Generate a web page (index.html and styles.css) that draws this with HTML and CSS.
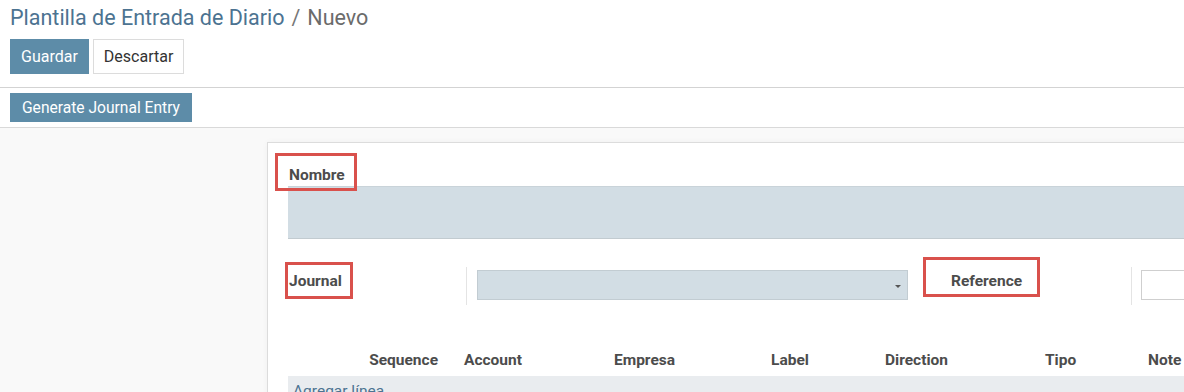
FILE: index.html
```html
<!DOCTYPE html>
<html lang="es">
<head>
<meta charset="utf-8">
<title>Plantilla de Entrada de Diario</title>
<link rel="stylesheet" href="styles.css">
</head>
<body>
<div class="control-panel">
  <div class="breadcrumb"><span class="crumb-link">Plantilla de Entrada de Diario</span><span class="crumb-sep">/</span><span class="crumb-active">Nuevo</span></div>
  <div class="cp-buttons">
    <button class="btn btn-primary">Guardar</button>
    <button class="btn btn-secondary">Descartar</button>
  </div>
</div>
<div class="statusbar">
  <button class="btn btn-primary btn-sm">Generate Journal Entry</button>
</div>
<div class="content">
  <div class="sheet">
    <div class="name-group">
      <span class="label boxed box-nombre">Nombre</span>
      <div class="name-input"></div>
    </div>
    <div class="fields-row">
      <div class="cell cell-label"><span class="label boxed box-journal">Journal</span></div>
      <div class="cell cell-select">
        <div class="select-input"><span class="caret"></span></div>
      </div>
      <div class="cell cell-ref"><span class="label boxed box-ref">Reference</span></div>
      <div class="cell cell-refinput"><div class="text-input"></div></div>
    </div>
    <div class="lines">
      <div class="lines-head">
        <span class="th th-seq">Sequence</span>
        <span class="th">Account</span>
        <span class="th">Empresa</span>
        <span class="th">Label</span>
        <span class="th">Direction</span>
        <span class="th">Tipo</span>
        <span class="th">Note</span>
      </div>
      <div class="add-line"><a class="add-link">Agregar línea</a></div>
    </div>
  </div>
</div>
</body>
</html>
```
FILE: styles.css
```css
html, body {
  margin: 0;
  padding: 0;
  overflow: hidden;
  width: 1184px;
  height: 392px;
  background: #f9f9f9;
  font-family: Roboto, "Noto Sans", sans-serif;
  color: #4c4c4c;
}

.control-panel {
  background: #fff;
  padding: 0 10px 12px 10px;
  border-bottom: 1px solid #d3d3d3;
  height: 75px;
}

.breadcrumb {
  height: 39px;
  line-height: 36px;
  font-size: 21.5px;
  display: flex;
  gap: 7px;
}
.crumb-link { color: #4c7391; }
.crumb-sep { color: #777; }
.crumb-active { color: #6b6b6b; }

.cp-buttons {
  display: flex;
  gap: 4px;
}

.btn {
  font-family: Roboto, "Noto Sans", sans-serif;
  font-size: 16px;
  border: 1px solid transparent;
  padding: 0 10px;
  height: 35px;
  border-radius: 0;
  cursor: pointer;
}
.btn-primary {
  background: #5d8ca8;
  color: #fff;
  border-color: #5d8ca8;
}
.btn-secondary {
  background: #fff;
  color: #333;
  border-color: #dcdcdc;
}
.btn-sm {
  height: 29px;
  font-size: 15.6px;
  padding: 0 11px;
}

.statusbar {
  background: #fff;
  height: 40px;
  padding: 5px 10px 0 10px;
  box-sizing: border-box;
  border-bottom: 1px solid #d9d9d9;
}

.content {
  padding: 14px 0 0 267px;
}

.sheet {
  width: 1000px;
  min-height: 260px;
  background: #fff;
  border: 1px solid #dcdcdc;
  box-shadow: 0 0 6px rgba(0,0,0,0.04);
  padding: 21px 0 0 20px;
  box-sizing: border-box;
}

.label {
  font-weight: bold;
  font-size: 15.5px;
  color: #4c4c4c;
  position: relative;
  display: inline-block;
}
.boxed::after {
  content: "";
  position: absolute;
  border: 3px solid #d9514c;
}
.box-nombre::after { left: -14px; right: -12px; top: -11px; bottom: -5px; }
.box-journal::after { left: -4px; right: -11px; top: -10px; bottom: -9px; }
.box-ref::after { left: -28px; right: -18px; top: -15px; bottom: -7px; }

.name-group .label {
  line-height: 22px;
  margin-left: 1px;
}
.name-input {
  margin-top: 0;
  height: 51px;
  background: #d2dde4;
  border-top: 1px solid #c9d3d9;
  border-bottom: 1px solid #c2cbd0;
  margin-right: -20px;
}

.fields-row {
  display: flex;
  align-items: stretch;
  margin-top: 28px;
  height: 38px;
}
.cell {
  display: flex;
  align-items: center;
  flex-shrink: 0;
}
.cell-label {
  width: 179px;
  border-right: 1px solid #e4e4e4;
  align-items: flex-start;
  padding-top: 5px;
  box-sizing: border-box;
}
.cell-label .label { margin-left: 1px; }
.cell-select {
  padding-left: 10px;
  padding-top: 3px;
  width: 456px;
  box-sizing: border-box;
  align-items: flex-start;
}
.select-input {
  width: 431px;
  height: 30px;
  background: #d2dde4;
  border: 1px solid #c2ccd2;
  box-sizing: border-box;
  position: relative;
}
.caret {
  position: absolute;
  right: 6px;
  top: 14px;
  width: 0;
  height: 0;
  border-left: 3.5px solid transparent;
  border-right: 3.5px solid transparent;
  border-top: 3.5px solid #555;
}
.cell-ref {
  width: 209px;
  padding-left: 28px;
  box-sizing: border-box;
  border-right: 1px solid #e4e4e4;
  align-items: flex-start;
  padding-top: 5px;
}
.cell-refinput {
  padding-left: 9px;
  padding-top: 3px;
  align-items: flex-start;
}
.text-input {
  width: 200px;
  height: 30px;
  border: 1px solid #cfcfcf;
  box-sizing: border-box;
  background: #fff;
}

.lines {
  margin-top: 39px;
  margin-right: -20px;
}
.lines-head {
  display: grid;
  grid-template-columns: 162px 150px 157px 114px 160px 103px 1fr;
  height: 32px;
  align-items: center;
  font-weight: bold;
  font-size: 15.5px;
  color: #4c4c4c;
}
.th { padding-left: 14px; white-space: nowrap; }
.th-seq { text-align: right; padding-left: 0; padding-right: 12px; }
.add-line {
  background: #e9ecef;
  height: 32px;
  padding-left: 5px;
  line-height: 30px;
  font-size: 15.5px;
}
.add-link { color: #4c7391; }
```
